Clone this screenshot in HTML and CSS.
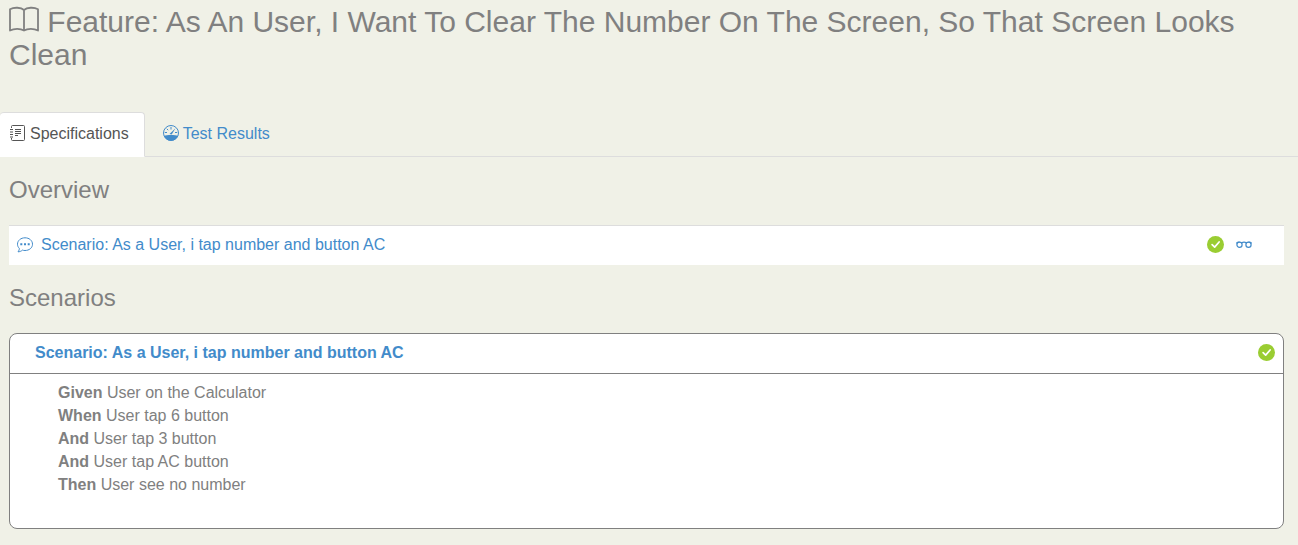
FILE: index.html
```html
<!DOCTYPE html>
<html lang="en">
<head>
<meta charset="utf-8">
<title>Feature report</title>
<link rel="stylesheet" href="styles.css">
</head>
<body>
<svg class="defs" aria-hidden="true">
  <symbol id="check" viewBox="0 0 16 16">
    <circle cx="8" cy="8" r="8" fill="#9acd32"/>
    <path d="M4.800 8.200 7.200 10.500 11.400 5.600" fill="none" stroke="#fff" stroke-width="1.600" stroke-linecap="round" stroke-linejoin="round"/>
  </symbol>
</svg>
<header class="page-header">
  <h1 class="title"><svg class="book" viewBox="0 0 30 26" aria-hidden="true"><path d="M15 4C12 1.300 5 1 1 3.200V24.500C5 22.300 11.500 22.300 15 24.500 18.500 22.300 25 22.300 29 24.500V3.200C25 1 18 1.300 15 4ZM15 4V24.500"/></svg> Feature: As An User, I Want To Clear The Number On The Screen, So That Screen Looks Clean</h1>
</header>
<nav class="tabs">
  <a class="tab active" href="#specifications" aria-current="page">
    <svg class="icon" viewBox="0 0 16 16" aria-hidden="true"><path d="M1.500 3V1.500A1 1 0 0 1 2.500.5H13.500a1 1 0 0 1 1 1v13a1 1 0 0 1-1 1H2.500a1 1 0 0 1-1-1V13M0 4.500H3M0 7H3M0 9.500H3M0 12H3M5 4.500H11M5 6.500H11M5 8.500H11M5 10.500H8"/></svg>
    <span>Specifications</span>
  </a>
  <a class="tab" href="#results">
    <svg class="icon" viewBox="0 0 16 16" aria-hidden="true"><circle cx="8" cy="8" r="7.500"/><path d="M8 2V4.500M3.800 3.800 5.200 5.200M1.800 7.500H4M12 7.500h2.200"/><path class="solid" d="M.8 10.800C4 9.800 12 9.800 15.200 10.800 12.500 17.400 3.500 17.400.8 10.800ZM6.500 9 12.500 3.300 8.700 9.500Z"/></svg>
    <span>Test Results</span>
  </a>
</nav>
<main class="content" id="specifications">
  <h2 class="section-title">Overview</h2>
  <div class="overview-row">
    <svg class="icon link-icon" viewBox="0 0 16 16" aria-hidden="true"><path d="M2.300 11.300C1.100 10.200.5 8.700.5 7.200.5 3.500 3.800.8 8 .8s7.500 2.700 7.500 6.400-3.300 6.300-7.500 6.300c-.9 0-1.800-.1-2.600-.4C4.300 14.200 2.600 14.800 1 14.800 2 13.700 2.400 12.500 2.300 11.300Z"/><path class="solid" d="M3.300 6.300h2v2h-2ZM7 6.300h2v2H7ZM10.700 6.300h2v2h-2Z"/></svg>
    <a class="overview-link" href="#scenario">Scenario: As a User, i tap number and button AC</a>
    <svg class="check" role="img" aria-label="Passed"><use href="#check"/></svg>
    <a class="details" href="#scenario" aria-label="View details"><svg class="icon glasses" viewBox="0 0 16 16" aria-hidden="true"><circle cx="3.500" cy="7.800" r="2.600"/><circle cx="12.500" cy="7.800" r="2.600"/><path d="M.3 6.300C1 5.300 2.500 5.100 3.500 5.100M15.700 6.300C15 5.300 13.500 5.100 12.500 5.100M5.500 6C7 5 9 5 10.500 6"/></svg></a>
  </div>
  <h2 class="section-title">Scenarios</h2>
  <section class="card" id="scenario">
    <header class="card-header">
      <a class="card-link" href="#scenario">Scenario: As a User, i tap number and button AC</a>
      <svg class="check" role="img" aria-label="Passed"><use href="#check"/></svg>
    </header>
    <div class="steps">
      <p><b>Given</b> User on the Calculator</p>
      <p><b>When</b> User tap 6 button</p>
      <p><b>And</b> User tap 3 button</p>
      <p><b>And</b> User tap AC button</p>
      <p><b>Then</b> User see no number</p>
    </div>
  </section>
</main>
</body>
</html>
```
FILE: styles.css
```css
* { box-sizing: border-box; }
body {
  margin: 0;
  background: #f0f1e7;
  color: #808080;
  font: 16px/23px "Liberation Sans", Arial, sans-serif;
}
a { color: #428bca; text-decoration: none; }
.defs { position: absolute; width: 0; height: 0; }
.page-header { padding: 5px 9px 41px; }
.title { margin: 0; font-size: 30px; font-weight: 400; line-height: 33px; }
.book {
  width: 30px;
  height: 26px;
  vertical-align: 0;
  fill: none;
  stroke: currentColor;
  stroke-width: 1.8;
  stroke-linejoin: round;
}
.icon {
  flex: none;
  width: 16px;
  height: 16px;
  fill: none;
  stroke: currentColor;
  stroke-width: 1;
}
.icon .solid { fill: currentColor; stroke: none; }
.link-icon { color: #428bca; }
.glasses { stroke-width: 1.2; }
.check { flex: none; width: 17px; height: 17px; }
.tabs { display: flex; border-bottom: 1px solid #ddd; }
.tab {
  display: flex;
  align-items: center;
  gap: 4px;
  height: 45px;
  padding: 0 15px 3px;
  border: 1px solid transparent;
  border-radius: 4px 4px 0 0;
  margin: 0 2px -1px 0;
}
.tab.active {
  padding-left: 10px;
  border-color: #ddd #ddd #fff transparent;
  border-left: 0;
  background: #fff;
  color: #555;
}
.content { padding: 0 14px 16px 9px; }
.section-title { margin: 0; padding: 20px 0 22px; font-size: 24px; font-weight: 400; line-height: 26px; }
.overview-row {
  display: flex;
  align-items: center;
  height: 40px;
  padding: 0 32px 2px 8px;
  border-top: 1px solid #ddd;
  background: #fff;
}
.overview-link { flex: 1; margin-left: 8px; }
.details { display: flex; margin-left: 12px; }
.card { border: 1px solid #808080; border-radius: 8px; background: #fff; }
.card-header {
  display: flex;
  align-items: center;
  justify-content: space-between;
  height: 40px;
  padding: 0 8px 2px 25px;
  border-bottom: 1px solid #808080;
}
.card-link { font-weight: 700; }
.steps { padding: 7px 48px 32px; }
.steps p { margin: 0; }
```
